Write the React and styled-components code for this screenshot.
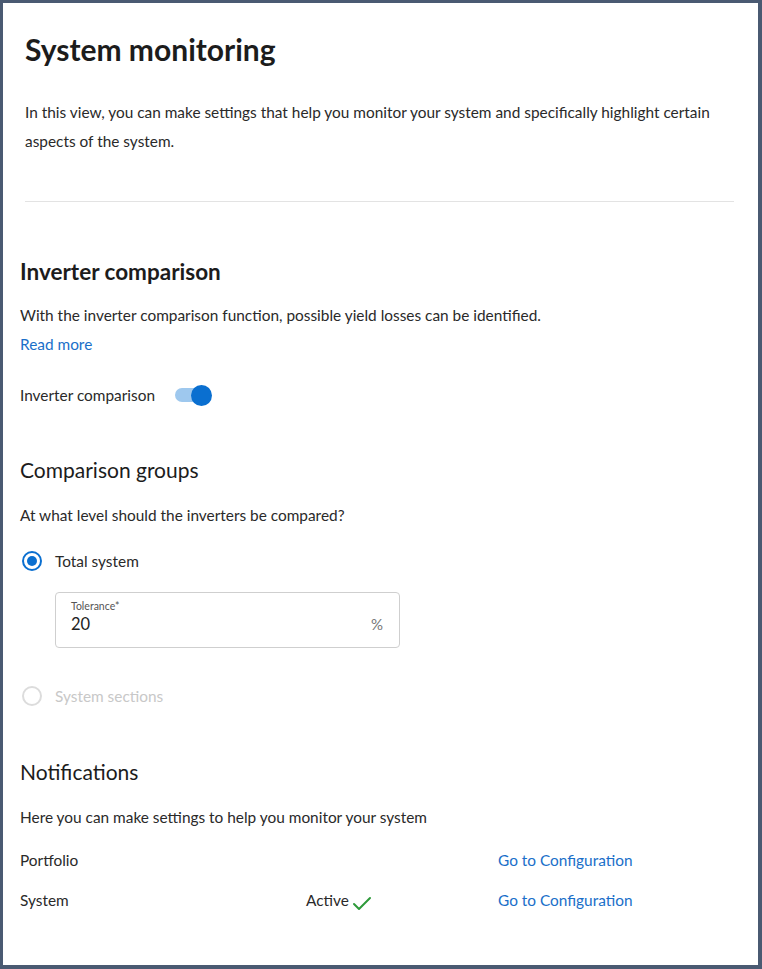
import React from "react";
import styled, { createGlobalStyle } from "styled-components";

const Global = createGlobalStyle`
  html, body { margin: 0; padding: 0; background: #fff; }
  body { font-family: Lato, "Open Sans", sans-serif; color: #222; }
`;

const Frame = styled.div`
  box-sizing: border-box;
  width: 762px;
  height: 969px;
  border: 3px solid #4a5a72;
  border-right-width: 4px;
  border-bottom-width: 4px;
  background: #fff;
  overflow: hidden;
`;

const Intro = styled.header`
  padding: 28px 24px 0 22px;
`;

const Title = styled.h1`
  margin: 0;
  font-size: 30px;
  font-weight: 700;
  line-height: 36px;
  color: #1c1c1c;
`;

const Lead = styled.p`
  margin: 31px 0 0;
  font-size: 15.4px;
  line-height: 29px;
  color: #2a2a2a;
`;

const Divider = styled.hr`
  margin: 45px 0 0;
  border: 0;
  border-top: 1px solid #e3e3e3;
`;

const Body = styled.main`
  padding: 56px 24px 0 17px;
`;

const SectionTitle = styled.h2`
  margin: ${(p) => p.$top || 0}px 0 0;
  font-size: ${(p) => (p.$bold ? 22.5 : 21)}px;
  font-weight: ${(p) => (p.$bold ? 700 : 400)};
  line-height: 28px;
  color: #1c1c1c;
`;

const Text = styled.p`
  margin: ${(p) => p.$top || 0}px 0 0;
  font-size: 15.4px;
  line-height: 22px;
  color: #2a2a2a;
`;

const Link = styled.a`
  display: inline-block;
  color: #1a6fc9;
  font-size: 15.4px;
  line-height: 22px;
  text-decoration: none;
  cursor: pointer;
`;

const ReadMore = styled(Link)`
  margin-top: 7px;
`;

const ToggleRow = styled.label`
  display: flex;
  align-items: center;
  gap: 20px;
  margin-top: 31px;
  font-size: 15.4px;
  color: #2a2a2a;
`;

const Track = styled.span`
  position: relative;
  display: inline-block;
  width: 34px;
  height: 14px;
  border-radius: 7px;
  background: #9ec8ee;
`;

const Knob = styled.span`
  position: absolute;
  right: -3px;
  top: -3.5px;
  width: 21px;
  height: 21px;
  border-radius: 50%;
  background: #0a6fd0;
`;

const RadioRow = styled.label`
  display: flex;
  align-items: center;
  gap: 13px;
  margin-top: ${(p) => p.$top || 0}px;
  padding-left: 2px;
  font-size: 15.4px;
  color: ${(p) => (p.$disabled ? "#c8c8c8" : "#2a2a2a")};
`;

const Radio = styled.span`
  box-sizing: border-box;
  width: 20px;
  height: 20px;
  border-radius: 50%;
  border: 2px solid ${(p) => (p.$checked ? "#0a6fd0" : "#dcdcdc")};
  display: flex;
  align-items: center;
  justify-content: center;
  &::after {
    content: "";
    width: 10px;
    height: 10px;
    border-radius: 50%;
    background: ${(p) => (p.$checked ? "#0a6fd0" : "transparent")};
  }
`;

const Field = styled.div`
  box-sizing: border-box;
  width: 345px;
  height: 56px;
  margin: 21px 0 0 35px;
  border: 1px solid #cfcfcf;
  border-radius: 4px;
  padding: 6px 16px 0 15px;
`;

const FieldLabel = styled.div`
  font-size: 10.5px;
  line-height: 14px;
  color: #555;
`;

const FieldValue = styled.div`
  display: flex;
  justify-content: space-between;
  font-size: 16.5px;
  line-height: 22px;
  color: #222;
`;

const Unit = styled.span`
  color: #777;
  font-size: 15px;
`;

const NotifyGrid = styled.div`
  display: grid;
  grid-template-columns: 286px 192px auto;
  row-gap: 18px;
  margin-top: 21px;
  font-size: 15.4px;
  line-height: 22px;
  color: #2a2a2a;
`;

const Status = styled.span`
  display: flex;
  align-items: flex-end;
  gap: 3px;
`;

const Check = () => (
  <svg width="20" height="16" viewBox="0 0 20 16" fill="none">
    <path d="M2 9l5 5L18 3" stroke="#2e9a3a" strokeWidth="2" strokeLinecap="round" strokeLinejoin="round" />
  </svg>
);

export default function App() {
  return (
    <>
      <Global />
      <Frame>
        <Intro>
          <Title>System monitoring</Title>
          <Lead>
            In this view, you can make settings that help you monitor your system and specifically highlight certain
            aspects of the system.
          </Lead>
          <Divider />
        </Intro>
        <Body>
          <SectionTitle $bold>Inverter comparison</SectionTitle>
          <Text $top={18}>With the inverter comparison function, possible yield losses can be identified.</Text>
          <ReadMore>Read more</ReadMore>
          <ToggleRow>
            Inverter comparison
            <Track>
              <Knob />
            </Track>
          </ToggleRow>

          <SectionTitle $top={52}>Comparison groups</SectionTitle>
          <Text $top={20}>At what level should the inverters be compared?</Text>
          <RadioRow $top={25}>
            <Radio $checked />
            Total system
          </RadioRow>
          <Field>
            <FieldLabel>Tolerance*</FieldLabel>
            <FieldValue>
              20
              <Unit>%</Unit>
            </FieldValue>
          </Field>
          <RadioRow $top={38} $disabled>
            <Radio />
            System sections
          </RadioRow>

          <SectionTitle $top={52}>Notifications</SectionTitle>
          <Text $top={20}>Here you can make settings to help you monitor your system</Text>
          <NotifyGrid>
            <span>Portfolio</span>
            <span />
            <Link>Go to Configuration</Link>
            <span>System</span>
            <Status>
              Active
              <Check />
            </Status>
            <Link>Go to Configuration</Link>
          </NotifyGrid>
        </Body>
      </Frame>
    </>
  );
}
